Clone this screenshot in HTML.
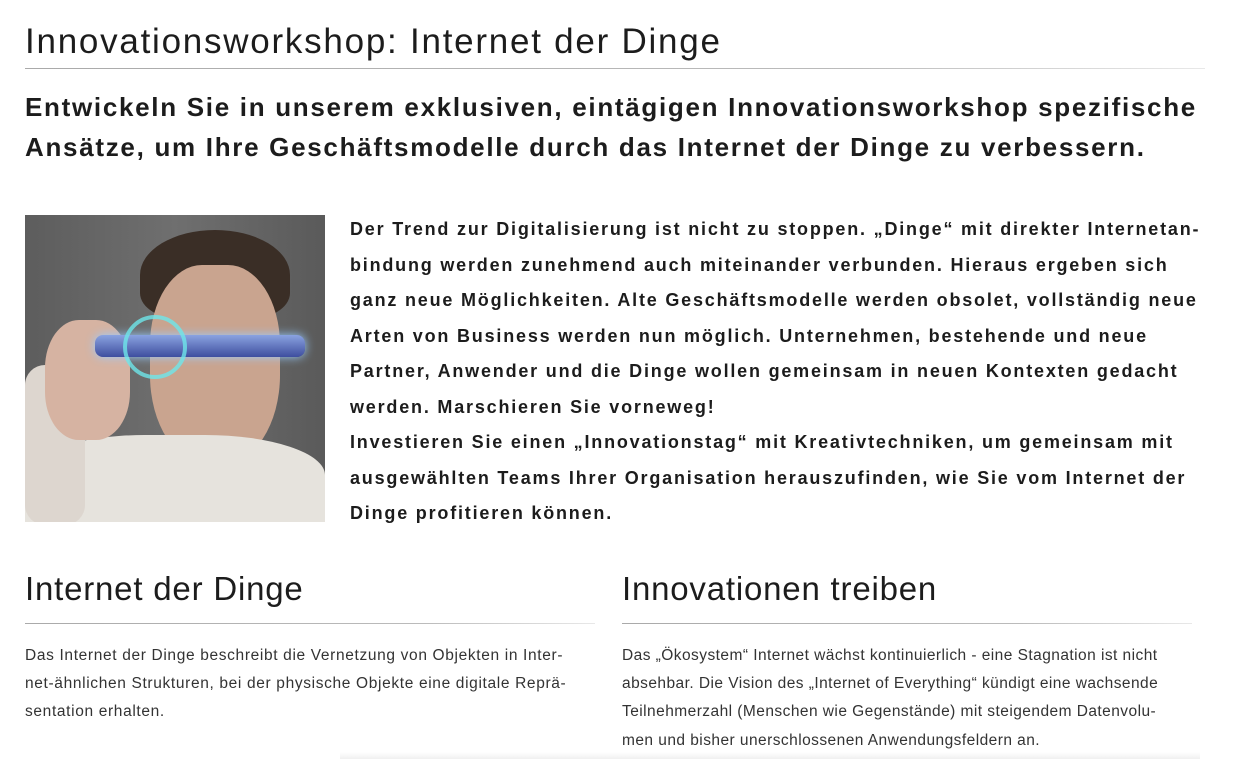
<!DOCTYPE html>
<html><head><meta charset="utf-8"><style>
body{margin:0;width:1235px;height:759px;background:#fff;position:relative;overflow:hidden;font-family:"Liberation Sans",sans-serif;color:#1c1c1c}
.a{position:absolute;white-space:nowrap}
.rule{position:absolute;height:1px;background:linear-gradient(90deg,#aaa,#bbb 70%,#e8e8e8)}
h1{position:absolute;margin:0;left:25px;top:22px;font-size:35px;font-weight:normal;letter-spacing:1.75px}
.sub{left:25px;font-size:26px;font-weight:bold;letter-spacing:1.7px}
.p{left:350px;font-size:18px;font-weight:bold;letter-spacing:1.8px}
.h2{font-size:33px;top:570px;letter-spacing:0.8px}
.b{font-size:15.5px;color:#333;letter-spacing:0.65px}
</style></head><body>
<h1>Innovationsworkshop: Internet der Dinge</h1>
<div class="rule" style="left:25px;top:68px;width:1180px"></div>
<div class="a sub" style="top:92px">Entwickeln Sie in unserem exklusiven, eintägigen Innovationsworkshop spezifische</div>
<div class="a sub" style="top:132px">Ansätze, um Ihre Geschäftsmodelle durch das Internet der Dinge zu verbessern.</div>

<div style="position:absolute;left:25px;top:215px;width:300px;height:307px;overflow:hidden;background:linear-gradient(90deg,#5d5d5d,#6f6f6f 50%,#5a5a5a)">
 <div style="position:absolute;left:115px;top:15px;width:150px;height:90px;border-radius:50% 50% 30% 30%;background:#3a2e26"></div>
 <div style="position:absolute;left:125px;top:50px;width:130px;height:200px;border-radius:40% 40% 45% 45%;background:#c9a48f"></div>
 <div style="position:absolute;left:0;top:220px;width:300px;height:100px;border-radius:40% 40% 0 0;background:#e6e3dd"></div>
 <div style="position:absolute;left:0;top:150px;width:60px;height:160px;background:#ddd6cf;border-radius:20px"></div>
 <div style="position:absolute;left:20px;top:105px;width:85px;height:120px;border-radius:40%;background:#d6b3a2"></div>
 <div style="position:absolute;left:70px;top:120px;width:210px;height:22px;border-radius:8px;background:linear-gradient(#8aa3e0,#3e4e9f);box-shadow:0 0 10px #9cf"></div>
 <div style="position:absolute;left:98px;top:100px;width:56px;height:56px;border-radius:50%;border:4px solid #6ee6ea;opacity:.8"></div>
</div>

<div class="a p" style="top:219px">Der Trend zur Digitalisierung ist nicht zu stoppen. „Dinge“ mit direkter Internetan-</div>
<div class="a p" style="top:254.5px">bindung werden zunehmend auch miteinander verbunden. Hieraus ergeben sich</div>
<div class="a p" style="top:290px">ganz neue Möglichkeiten. Alte Geschäftsmodelle werden obsolet, vollständig neue</div>
<div class="a p" style="top:325.5px">Arten von Business werden nun möglich. Unternehmen, bestehende und neue</div>
<div class="a p" style="top:361px">Partner, Anwender und die Dinge wollen gemeinsam in neuen Kontexten gedacht</div>
<div class="a p" style="top:396.5px">werden. Marschieren Sie vorneweg!</div>
<div class="a p" style="top:432px">Investieren Sie einen „Innovationstag“ mit Kreativtechniken, um gemeinsam mit</div>
<div class="a p" style="top:467.5px">ausgewählten Teams Ihrer Organisation herauszufinden, wie Sie vom Internet der</div>
<div class="a p" style="top:503px">Dinge profitieren können.</div>

<div class="a h2" style="left:25px">Internet der Dinge</div>
<div class="a h2" style="left:622px">Innovationen treiben</div>
<div class="rule" style="left:25px;top:623px;width:570px"></div>
<div class="rule" style="left:622px;top:623px;width:570px"></div>

<div class="a b" style="left:25px;top:647px">Das Internet der Dinge beschreibt die Vernetzung von Objekten in Inter-</div>
<div class="a b" style="left:25px;top:675px">net-ähnlichen Strukturen, bei der physische Objekte eine digitale Reprä-</div>
<div class="a b" style="left:25px;top:703px">sentation erhalten.</div>
<div class="a b" style="left:622px;top:647px;letter-spacing:0.45px">Das „Ökosystem“ Internet wächst kontinuierlich - eine Stagnation ist nicht</div>
<div class="a b" style="left:622px;top:675px;letter-spacing:0.45px">absehbar. Die Vision des „Internet of Everything“ kündigt eine wachsende</div>
<div class="a b" style="left:622px;top:703px;letter-spacing:0.45px">Teilnehmerzahl (Menschen wie Gegenstände) mit steigendem Datenvolu-</div>
<div class="a b" style="left:622px;top:732px;letter-spacing:0.45px">men und bisher unerschlossenen Anwendungsfeldern an.</div>
<div style="position:absolute;left:340px;top:752px;width:860px;height:7px;background:linear-gradient(#fff,#f0f0f0)"></div>
</body></html>
